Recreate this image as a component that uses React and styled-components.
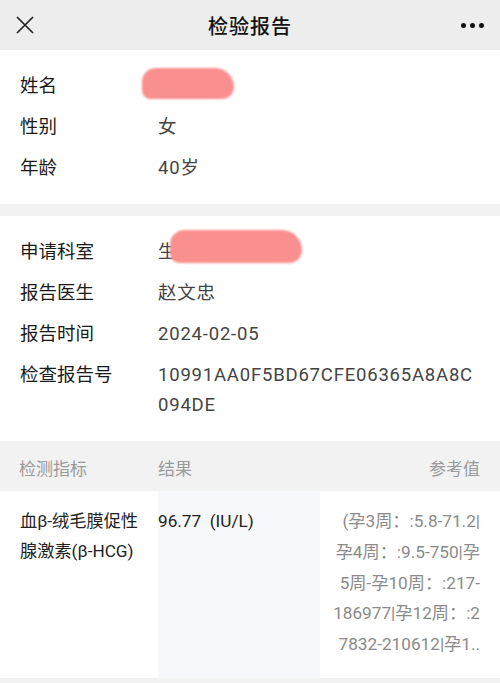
import React from 'react'
import styled, { createGlobalStyle } from 'styled-components'

const GlobalStyle = createGlobalStyle`
    html, body {
        margin: 0;
        padding: 0;
        background: #f2f2f2;
        font-family: Roboto, "Noto Sans CJK SC", sans-serif;
    }
`

const patient = [
    { label: '姓名', value: '', redact: { left: 142, top: 3, width: 92, height: 31 } },
    { label: '性别', value: '女' },
    { label: '年龄', value: '40岁' },
]

const report = [
    { label: '申请科室', value: '生', redact: { left: 170, top: -1, width: 132, height: 33 } },
    { label: '报告医生', value: '赵文忠' },
    { label: '报告时间', value: '2024-02-05' },
    { label: '检查报告号', value: '10991AA0F5BD67CFE06365A8A8C094DE' },
]

const refLines = [
    '(孕3周：:5.8-71.2|',
    '孕4周：:9.5-750|孕',
    '5周-孕10周：:217-',
    '186977|孕12周：:2',
    '7832-210612|孕1..',
]

function App() {
    return (
        <Page>
            <GlobalStyle />
            <TopBar>
                <IconButton aria-label="close">
                    <svg width="18" height="18" viewBox="0 0 18 18">
                        <path d="M1 1L17 17M17 1L1 17" stroke="#222" strokeWidth="1.7" fill="none" />
                    </svg>
                </IconButton>
                <Title>检验报告</Title>
                <IconButton aria-label="more">
                    <Dot /><Dot /><Dot />
                </IconButton>
            </TopBar>

            <Section>
                {patient.map(r => (
                    <Row key={r.label}>
                        <Label>{r.label}</Label>
                        <Value>{r.value}</Value>
                        {r.redact && <Redaction style={r.redact} />}
                    </Row>
                ))}
            </Section>

            <Section top={12}>
                {report.map(r => (
                    <Row key={r.label}>
                        <Label>{r.label}</Label>
                        <Value>{r.value}</Value>
                        {r.redact && <Redaction style={r.redact} />}
                    </Row>
                ))}
            </Section>

            <Table>
                <HeadCell>检测指标</HeadCell>
                <HeadCell>结果</HeadCell>
                <HeadCell align="right">参考值</HeadCell>

                <BodyCell pad="0 8px 0 20px">血β-绒毛膜促性腺激素(β-HCG)</BodyCell>
                <BodyCell shade>96.77&nbsp;&nbsp;(IU/L)</BodyCell>
                <RefCell>
                    {refLines.map(l => <span key={l}>{l}</span>)}
                </RefCell>
            </Table>
        </Page>
    )
}

const Page = styled.div`
    width: 500px;
    min-height: 683px;
    background: #f2f2f2;
`

const TopBar = styled.div`
    height: 50px;
    display: flex;
    align-items: center;
    justify-content: space-between;
    padding: 0 16px;
    box-sizing: border-box;
    background: #ededed;
`

const IconButton = styled.div`
    width: 30px;
    height: 30px;
    display: flex;
    align-items: center;
    justify-content: center;
    gap: 4px;
    &:first-child {
        justify-content: flex-start;
    }
    &:last-child {
        justify-content: flex-end;
    }
`

const Dot = styled.span`
    width: 5px;
    height: 5px;
    border-radius: 50%;
    background: #111;
`

const Title = styled.div`
    font-size: 20px;
    font-weight: 500;
    color: #111;
    letter-spacing: 1px;
`

const Section = styled.div`
    background: #fff;
    margin-top: ${props => props.top || 0}px;
    padding: 15px 0 16px;
`

const Row = styled.div`
    position: relative;
    display: flex;
    padding: 5.5px 20px;
    line-height: 30px;
    font-size: 18.5px;
`

const Label = styled.div`
    width: 138px;
    flex-shrink: 0;
    color: #1a1a1a;
`

const Value = styled.div`
    flex: 1;
    color: #444;
    letter-spacing: 0.8px;
    word-break: break-all;
`

const Redaction = styled.span`
    position: absolute;
    background: #fa8f8f;
    border-radius: 16px 22px 14px 10px;
    filter: blur(1px);
`

const Table = styled.div`
    display: grid;
    grid-template-columns: 158px 160px 1fr;
    background: #fff;
`

const HeadCell = styled.div`
    background: #f2f2f2;
    color: #9a9a9a;
    font-size: 17px;
    line-height: 24px;
    padding: 16px 20px 10px 0;
    text-align: ${props => props.align || 'left'};
    &:first-child {
        padding-left: 19px;
    }
`

const BodyCell = styled.div`
    background: ${props => props.shade ? '#f6f8fb' : '#fff'};
    padding: ${props => props.pad || '0'};
    padding-top: 15px;
    padding-bottom: 18px;
    font-size: 17.2px;
    line-height: 30px;
    color: #222;
`

const RefCell = styled.div`
    padding: 15px 20px 18px 0;
    display: flex;
    flex-direction: column;
    align-items: flex-end;
    font-size: 17.2px;
    line-height: 30.8px;
    color: #8a8a8a;
    white-space: nowrap;
    border-left: 2px solid #f6f8fb;
`

export default App
